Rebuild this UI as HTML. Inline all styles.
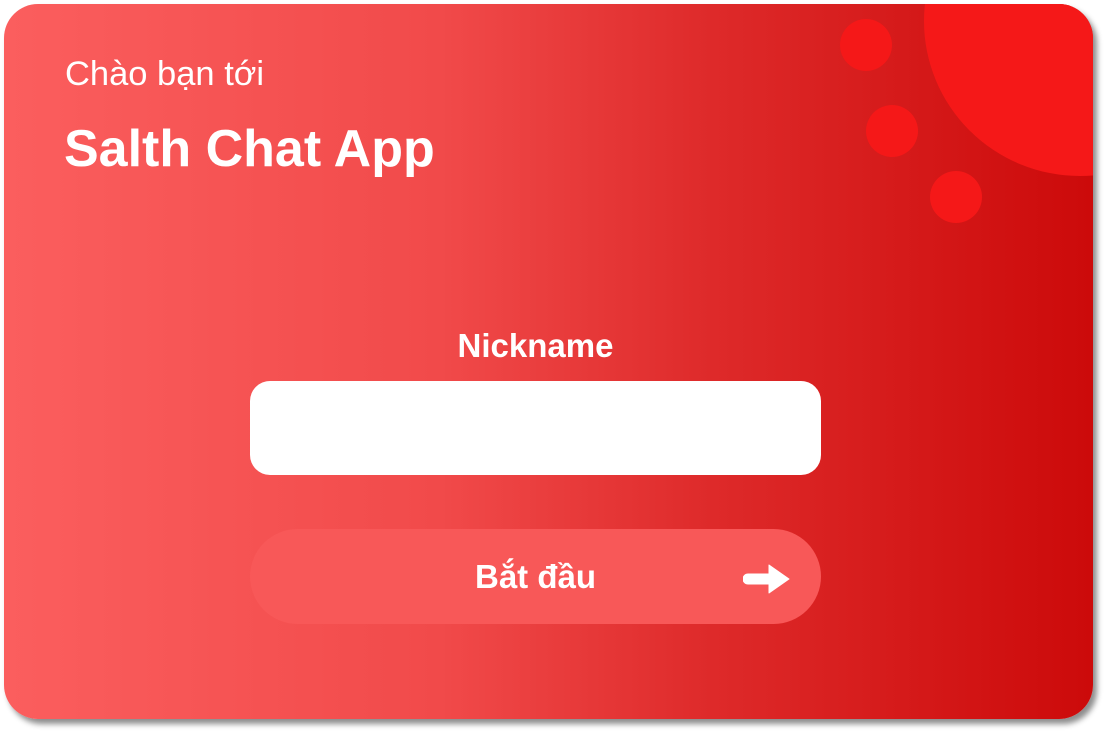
<!DOCTYPE html>
<html><head><meta charset="utf-8"><style>
html,body{margin:0;padding:0;background:#fff;width:1107px;height:733px;overflow:hidden}
.card{position:absolute;left:4px;top:4px;width:1089px;height:715px;border-radius:34px;overflow:hidden;
background:linear-gradient(90deg,#fb5e5e 0%,#f14a4a 40%,#de2a2a 65%,#cc0a0a 100%);
box-shadow:4px 5px 6px rgba(0,0,0,0.45);font-family:"Liberation Sans",sans-serif;color:#fff}
.c{position:absolute;border-radius:50%;background:#f51818}
.t1{position:absolute;left:61px;top:50px;font-size:34.5px;font-weight:300;line-height:40px}
.t2{position:absolute;left:60px;top:115px;font-size:52px;font-weight:bold;line-height:60px}
.nick{position:absolute;left:246px;width:571px;top:322px;text-align:center;font-size:33px;font-weight:bold;line-height:40px}
.inp{position:absolute;left:246px;top:377px;width:571px;height:94px;border-radius:20px;background:#fff}
.btn{position:absolute;left:246px;top:525px;width:571px;height:95px;border-radius:48px;background:#f85858}
.btn span{position:absolute;left:0;width:571px;top:28px;text-align:center;font-size:33px;font-weight:bold;line-height:40px}
</style></head><body>
<div class="card">
<div class="c" style="left:920px;top:-138px;width:312px;height:310px"></div>
<div class="c" style="left:836px;top:15px;width:52px;height:52px"></div>
<div class="c" style="left:862px;top:101px;width:52px;height:52px"></div>
<div class="c" style="left:926px;top:167px;width:52px;height:52px"></div>
<div class="t1">Chào bạn tới</div>
<div class="t2">Salth Chat App</div>
<div class="nick">Nickname</div>
<div class="inp"></div>
<div class="btn"><span>Bắt đầu</span>
<svg style="position:absolute;left:493px;top:33px" width="52" height="34" viewBox="0 0 52 34"><path d="M5 12h21V3l20 14-20 14v-9H5a5 5 0 0 1 0-10z" fill="#fff" stroke="#fff" stroke-width="1" stroke-linejoin="round"/></svg>
</div>
</div>
</body></html>
